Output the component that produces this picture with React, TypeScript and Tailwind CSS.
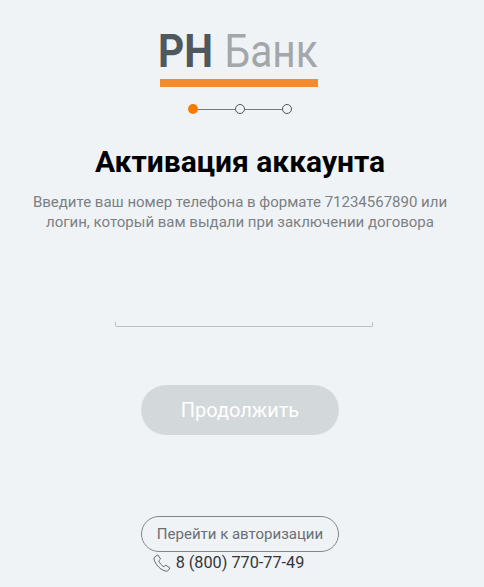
import React from 'react';

const App: React.FC = () => {
  return (
    <div className="h-[587px] w-[484px] overflow-hidden bg-[#f0f3f6] pr-[4px] flex flex-col items-center font-['Roboto',sans-serif]">
      <div className="mt-[22px] mr-[2px] w-[158px] flex flex-col items-start">
        <div className="-ml-[2px] h-[57px] flex items-center leading-none text-[46px] whitespace-nowrap origin-left scale-x-[0.885]">
          <span className="font-bold text-[#50585f]">РН</span>
          <span className="ml-[13px] font-normal text-[#a3a7aa]">Банк</span>
        </div>
        <div className="w-[158px] h-[8px] bg-[#f68b2c]" />
      </div>

      <div className="mt-[17px] flex items-center">
        <div className="w-[10px] h-[10px] rounded-full bg-[#f57c00]" />
        <div className="w-[37px] h-px bg-[#777]" />
        <div className="w-[10px] h-[10px] rounded-full border border-[#555]" />
        <div className="w-[37px] h-px bg-[#777]" />
        <div className="w-[10px] h-[10px] rounded-full border border-[#555]" />
      </div>

      <h1 className="mt-[30px] text-[30px] leading-[36px] font-bold text-black">Активация аккаунта</h1>

      <p className="mt-[12px] text-[15px] leading-[20px] text-[#7b8084] text-center whitespace-nowrap">
        Введите ваш номер телефона в формате 71234567890 или
        <br />
        логин, который вам выдали при заключении договора
      </p>

      <div className="mt-[90px] ml-[8px] w-[258px] h-[5px] border border-t-0 border-[#b9bfc4] rounded-b-[2px]" />

      <button className="mt-[58px] w-[198px] h-[50px] rounded-full bg-[#d3d8db] text-white text-[20px] leading-none">
        Продолжить
      </button>

      <button className="mt-[81px] w-[198px] h-[36px] rounded-full border border-[#7f868b] text-[15px] text-[#6a6f73]">
        Перейти к авторизации
      </button>

      <div className="-mt-px mr-[24px] flex items-center gap-[4px] text-[16.25px] leading-[24px] text-[#33373a]">
        <svg width="20" height="20" viewBox="0 0 24 24" fill="none" stroke="#666" strokeWidth="1.2" strokeLinecap="round" strokeLinejoin="round">
          <path d="M6.500 2.500 3 5c-1 1-.8 3 .5 5.500 2.500 5 6 8.500 10.500 10.500 2.500 1 4.500 1 5.500 0l2-3-5-3.500-2 2c-3-1.500-5-4-6.500-7l2-2z" />
        </svg>
        <span>8 (800) 770-77-49</span>
      </div>
    </div>
  );
};

export default App;
